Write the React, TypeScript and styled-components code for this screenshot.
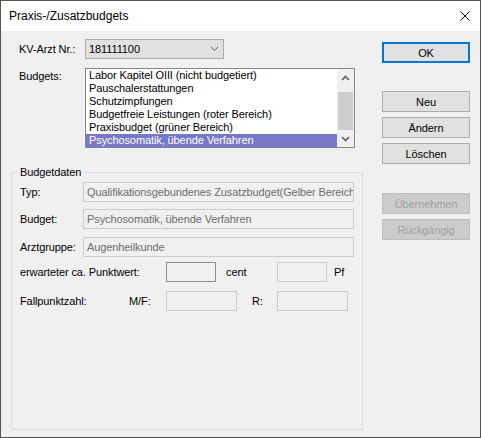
import React from 'react'
import styled, { createGlobalStyle } from 'styled-components'

const GlobalStyle = createGlobalStyle`
    html, body {
        margin: 0;
        padding: 0;
        background: #f0f0f0;
    }
    body {
        font-family: "Liberation Sans", Arial, sans-serif;
        font-size: 11px;
    }
`

const StyledWindow = styled.div`
    width: 481px;
    height: 438px;
    box-sizing: border-box;
    border: 1px solid #555555;
    background: #f0f0f0;
    display: flex;
    flex-direction: column;
    color: #000;
    letter-spacing: -0.1px;
`

const StyledTitleBar = styled.div`
    height: 30px;
    flex-shrink: 0;
    background: #ffffff;
    display: flex;
    align-items: center;
    justify-content: space-between;
    padding: 0 10px 0 8px;
`

const StyledTitle = styled.div`
    font-size: 12px;
    letter-spacing: 0;
`

const StyledBody = styled.div`
    flex: 1;
    display: flex;
    min-height: 0;
`

const StyledLeftPane = styled.div`
    width: 362px;
    box-sizing: border-box;
    display: flex;
    flex-direction: column;
    padding: 8px 0 7px 0;
`

const StyledRow = styled.div<{ top?: number }>`
    display: flex;
    align-items: flex-start;
    padding-left: 18px;
    margin-top: ${props => props.top || 0}px;
`

const StyledLabel = styled.div<{ width: number, pad?: number }>`
    width: ${props => props.width}px;
    flex-shrink: 0;
    line-height: 13px;
    padding-top: ${props => props.pad || 0}px;
    white-space: nowrap;
`

const StyledCombo = styled.div`
    width: 139px;
    height: 20px;
    box-sizing: border-box;
    border: 1px solid #adadad;
    background: #e1e1e1;
    display: flex;
    align-items: center;
    justify-content: space-between;
    padding: 0 4px 0 3px;
`

const StyledListBox = styled.div`
    width: 270px;
    height: 80px;
    box-sizing: border-box;
    border: 1px solid #828790;
    background: #ffffff;
    display: flex;
`

const StyledItems = styled.div`
    flex: 1;
    display: flex;
    flex-direction: column;
    overflow: hidden;
`

const StyledItem = styled.div<{ selected?: boolean }>`
    height: 13px;
    line-height: 13px;
    padding-left: 3px;
    white-space: nowrap;
    ${props => props.selected && `
        background: #7878c8;
        color: #ffffff;
    `}
`

const StyledScrollBar = styled.div`
    width: 17px;
    background: #f0f0f0;
    display: flex;
    flex-direction: column;
`

const StyledScrollArrow = styled.div`
    height: 17px;
    display: flex;
    align-items: center;
    justify-content: center;
`

const StyledTrack = styled.div`
    flex: 1;
    display: flex;
    flex-direction: column;
    justify-content: flex-end;
`

const StyledThumb = styled.div`
    height: 38px;
    margin: 0 1px;
    background: #cdcdcd;
`

const StyledGroup = styled.fieldset`
    margin: 18px 0 0 10px;
    width: 352px;
    box-sizing: border-box;
    border: 1px solid #dcdcdc;
    padding: 0 8px;
    flex: 1;
    min-width: 0;
`

const StyledLegend = styled.legend`
    padding: 0 3px;
    margin-left: -3px;
    line-height: 13px;
`

const StyledGroupRow = styled.div<{ top: number }>`
    display: flex;
    align-items: center;
    margin-top: ${props => props.top}px;
`

const StyledGroupLabel = styled.div<{ width: number, gap?: number }>`
    width: ${props => props.width}px;
    margin-left: ${props => props.gap || 0}px;
    flex-shrink: 0;
    white-space: nowrap;
`

const StyledField = styled.div<{ width: number, strong?: boolean }>`
    width: ${props => props.width}px;
    height: 20px;
    flex-shrink: 0;
    box-sizing: border-box;
    border: 1px solid ${props => props.strong ? '#8f8f8f' : '#cccccc'};
    background: #f0f0f0;
    color: #6d6d6d;
    padding-left: 3px;
    line-height: 18px;
    white-space: nowrap;
    overflow: hidden;
`

const StyledButtonColumn = styled.div`
    margin-left: 19px;
    padding-top: 11px;
    display: flex;
    flex-direction: column;
`

const StyledButton = styled.button<{ top?: number, primary?: boolean }>`
    width: 88px;
    height: 21px;
    box-sizing: border-box;
    margin: ${props => props.top || 0}px 0 0 0;
    padding: 0;
    border: 1px solid #adadad;
    background: #e1e1e1;
    font-family: inherit;
    font-size: 11px;
    letter-spacing: -0.1px;
    color: #000;

    ${props => props.primary && `
        border: 2px solid #0078d7;
    `}

    &:disabled {
        background: #cccccc;
        border-color: #bfbfbf;
        color: #a0a0a0;
    }
`

const budgets = [
    'Labor Kapitel OIII (nicht budgetiert)',
    'Pauschalerstattungen',
    'Schutzimpfungen',
    'Budgetfreie Leistungen (roter Bereich)',
    'Praxisbudget (grüner Bereich)',
    'Psychosomatik, übende Verfahren',
]

const Chevron = ({ up, color, width }: { up?: boolean, color: string, width: number }) => (
    <svg width="9" height="6" viewBox="0 0 9 6">
        <polyline
            points={up ? '1,5 4.5,1.5 8,5' : '1,1 4.5,4.5 8,1'}
            fill="none"
            stroke={color}
            strokeWidth={width}
        />
    </svg>
)

const App = () => {
    return (<>
        <GlobalStyle />
        <StyledWindow>
            <StyledTitleBar>
                <StyledTitle>Praxis-/Zusatzbudgets</StyledTitle>
                <svg width="10" height="10" viewBox="0 0 10 10">
                    <path d="M0.5,0.5 L9.5,9.5 M9.5,0.5 L0.5,9.5" stroke="#000" strokeWidth="1" />
                </svg>
            </StyledTitleBar>

            <StyledBody>
                <StyledLeftPane>
                    <StyledRow>
                        <StyledLabel width={66} pad={4}>KV-Arzt Nr.:</StyledLabel>
                        <StyledCombo>
                            <span>181111100</span>
                            <Chevron color="#5a5a5a" width={1} />
                        </StyledCombo>
                    </StyledRow>

                    <StyledRow top={9}>
                        <StyledLabel width={66} pad={2}>Budgets:</StyledLabel>
                        <StyledListBox>
                            <StyledItems>
                                {
                                    budgets.map((b, i) => (
                                        <StyledItem key={b} selected={i === budgets.length - 1}>{b}</StyledItem>
                                    ))
                                }
                            </StyledItems>
                            <StyledScrollBar>
                                <StyledScrollArrow><Chevron up color="#606060" width={1.6} /></StyledScrollArrow>
                                <StyledTrack><StyledThumb /></StyledTrack>
                                <StyledScrollArrow><Chevron color="#606060" width={1.6} /></StyledScrollArrow>
                            </StyledScrollBar>
                        </StyledListBox>
                    </StyledRow>

                    <StyledGroup>
                        <StyledLegend>Budgetdaten</StyledLegend>
                        <StyledGroupRow top={3}>
                            <StyledGroupLabel width={63}>Typ:</StyledGroupLabel>
                            <StyledField width={271}>Qualifikationsgebundenes Zusatzbudget(Gelber Bereich)</StyledField>
                        </StyledGroupRow>
                        <StyledGroupRow top={7}>
                            <StyledGroupLabel width={63}>Budget:</StyledGroupLabel>
                            <StyledField width={271}>Psychosomatik, übende Verfahren</StyledField>
                        </StyledGroupRow>
                        <StyledGroupRow top={8}>
                            <StyledGroupLabel width={63}>Arztgruppe:</StyledGroupLabel>
                            <StyledField width={271}>Augenheilkunde</StyledField>
                        </StyledGroupRow>
                        <StyledGroupRow top={5}>
                            <StyledGroupLabel width={146}>erwarteter ca. Punktwert:</StyledGroupLabel>
                            <StyledField width={50} strong />
                            <StyledGroupLabel width={51} gap={10}>cent</StyledGroupLabel>
                            <StyledField width={50} />
                            <StyledGroupLabel width={20} gap={7}>Pf</StyledGroupLabel>
                        </StyledGroupRow>
                        <StyledGroupRow top={9}>
                            <StyledGroupLabel width={109}>Fallpunktzahl:</StyledGroupLabel>
                            <StyledGroupLabel width={37}>M/F:</StyledGroupLabel>
                            <StyledField width={71} />
                            <StyledGroupLabel width={25} gap={15}>R:</StyledGroupLabel>
                            <StyledField width={71} />
                        </StyledGroupRow>
                    </StyledGroup>
                </StyledLeftPane>

                <StyledButtonColumn>
                    <StyledButton primary>OK</StyledButton>
                    <StyledButton top={28}>Neu</StyledButton>
                    <StyledButton top={5}>Ändern</StyledButton>
                    <StyledButton top={5}>Löschen</StyledButton>
                    <StyledButton top={29} disabled>Übernehmen</StyledButton>
                    <StyledButton top={5} disabled>Rückgängig</StyledButton>
                </StyledButtonColumn>
            </StyledBody>
        </StyledWindow>
    </>)
}

export default App
